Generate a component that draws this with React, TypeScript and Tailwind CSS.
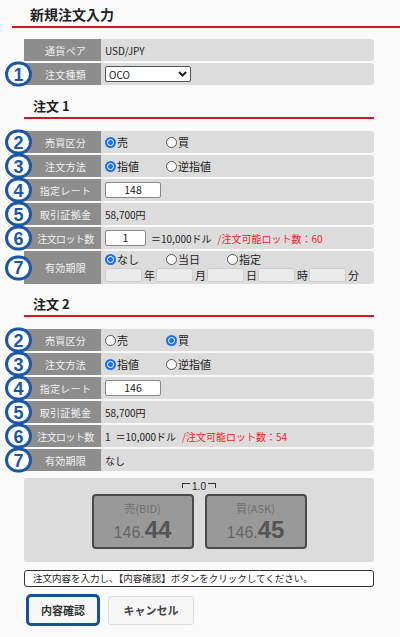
import type { ReactNode } from "react"

const FONT = { fontFamily: '"Noto Sans CJK JP", "Noto Sans", "Liberation Sans", sans-serif' }

function Badge({ n }: { n: number }) {
  return (
    <span
      className="absolute left-[-19px] top-1/2 -translate-y-1/2 w-[27px] h-[25px] rounded-full border-[3px] border-[#1c57a5] bg-white text-[#1c57a5] flex items-center justify-center text-[18px] font-bold leading-none z-10"
      style={{ fontFamily: '"Liberation Sans", Arial, sans-serif' }}
    >
      {n}
    </span>
  )
}

function Row({ label, n, tall, children }: { label: string; n?: number; tall?: boolean; children?: ReactNode }) {
  return (
    <div className={`relative flex mb-[2px] ${tall ? "h-[33px]" : "h-[22px]"}`}>
      {n !== undefined && <Badge n={n} />}
      <div
        className={`w-[77px] shrink-0 bg-[#8d8d8d] text-[#f2f2f2] text-[10px] flex items-center justify-center pl-[6px] ${
          label.length > 5 ? "tracking-[-0.6px]" : "tracking-[0.3px]"
        }`}
      >
        {label}
      </div>
      <div className="flex-1 bg-[#dcdcdc] rounded-r-[3px] pl-[4px] flex items-center text-[10px] text-[#222]">
        {children}
      </div>
    </div>
  )
}

function Radio({ checked, label }: { checked?: boolean; label: string }) {
  return (
    <span className="w-[61px] flex items-center">
      {checked ? (
        <span className="w-[11px] h-[11px] rounded-full bg-[#1a73e8] flex items-center justify-center">
          <span className="w-[7px] h-[7px] rounded-full border-[1.5px] border-white bg-[#1a73e8]" />
        </span>
      ) : (
        <span className="w-[11px] h-[11px] rounded-full border border-[#555] bg-white" />
      )}
      <span className="ml-[1px] text-[11px]">{label}</span>
    </span>
  )
}

function Heading({ children }: { children: ReactNode }) {
  return (
    <div className="border-b-2 border-[#d0191e] pl-[9px] pb-[2px] text-[13px] font-bold text-[#222] leading-[18px]">
      {children}
    </div>
  )
}

function DateBox({ unit }: { unit: string }) {
  return (
    <span className="flex items-center w-[51px]">
      <span className="w-[37px] h-[14px] bg-[#ebebeb] border border-[#cdcdcd] rounded-[2px]" />
      <span className="ml-[2px] text-[11px]">{unit}</span>
    </span>
  )
}

function PriceButton({ label, big }: { label: string; big: string }) {
  return (
    <div className="w-[102px] h-[55px] bg-[#999999] border-2 border-[#4a4a4a] rounded-[4px] flex flex-col items-center justify-center text-[#5c5c5c]">
      <div className="text-[11px] leading-[13px] text-[#6e6e6e]">{label}</div>
      <div className="flex items-baseline leading-none mt-[3px]" style={{ fontFamily: '"Liberation Sans", Arial, sans-serif' }}>
        <span className="text-[16px] text-[#666]">146.</span>
        <span className="text-[24px] font-bold text-[#555]">{big}</span>
      </div>
    </div>
  )
}

export default function App() {
  return (
    <div className="w-[400px] h-[637px] bg-[#fafafa] overflow-hidden" style={FONT}>
      {/* page title */}
      <div className="pt-[5px] ml-[12px]">
        <div className="border-b-2 border-[#d0191e] pl-[18px] pb-[2px] text-[14px] font-bold text-[#222] leading-[19px]">
          新規注文入力
        </div>
      </div>

      <div className="ml-[24px] w-[350px]">
        <div className="mt-[11px]">
          <Row label="通貨ペア">USD/JPY</Row>
          <Row label="注文種類" n={1}>
            <span className="w-[86px] h-[16px] bg-white border border-[#555] rounded-[2px] flex items-center justify-between px-[3px] text-[10px]">
              <span>OCO</span>
              <svg width="9" height="6" viewBox="0 0 9 6">
                <path d="M1 1l3.5 3.5L8 1" fill="none" stroke="#222" strokeWidth="2" />
              </svg>
            </span>
          </Row>
        </div>

        {/* order 1 */}
        <div className="mt-[12px]">
          <Heading>注文 1</Heading>
        </div>
        <div className="mt-[12px]">
          <Row label="売買区分" n={2}>
            <Radio checked label="売" />
            <Radio label="買" />
          </Row>
          <Row label="注文方法" n={3}>
            <Radio checked label="指値" />
            <Radio label="逆指値" />
          </Row>
          <Row label="指定レート" n={4}>
            <span className="w-[56px] h-[16px] bg-white border border-[#888] rounded-[2px] flex items-center justify-center text-[10.5px]">
              148
            </span>
          </Row>
          <Row label="取引証拠金" n={5}>58,700円</Row>
          <Row label="注文ロット数" n={6}>
            <span className="w-[41px] h-[16px] bg-white border border-[#888] rounded-[2px] flex items-center justify-center text-[10.5px]">
              1
            </span>
            <span className="ml-[5px]">＝10,000ドル</span>
            <span className="ml-[6px] text-[#f01e1e]">/注文可能ロット数：60</span>
          </Row>
          <Row label="有効期限" n={7} tall>
            <div className="flex flex-col">
              <div className="flex h-[15px] items-center">
                <Radio checked label="なし" />
                <Radio label="当日" />
                <Radio label="指定" />
              </div>
              <div className="flex h-[16px] items-center">
                <DateBox unit="年" />
                <DateBox unit="月" />
                <DateBox unit="日" />
                <DateBox unit="時" />
                <DateBox unit="分" />
              </div>
            </div>
          </Row>
        </div>

        {/* order 2 */}
        <div className="mt-[11px]">
          <Heading>注文 2</Heading>
        </div>
        <div className="mt-[12px]">
          <Row label="売買区分" n={2}>
            <Radio label="売" />
            <Radio checked label="買" />
          </Row>
          <Row label="注文方法" n={3}>
            <Radio checked label="指値" />
            <Radio label="逆指値" />
          </Row>
          <Row label="指定レート" n={4}>
            <span className="w-[56px] h-[16px] bg-white border border-[#888] rounded-[2px] flex items-center justify-center text-[10.5px]">
              146
            </span>
          </Row>
          <Row label="取引証拠金" n={5}>58,700円</Row>
          <Row label="注文ロット数" n={6}>
            <span>1</span>
            <span className="ml-[5px]">＝10,000ドル</span>
            <span className="ml-[6px] text-[#f01e1e]">/注文可能ロット数：54</span>
          </Row>
          <Row label="有効期限" n={7}>なし</Row>
        </div>

        {/* price panel */}
        <div className="mt-[7px] h-[84px] bg-[#dcdcdc] rounded-[3px] flex flex-col items-center pt-[3px]">
          <div className="text-[10px] leading-[12px] text-[#222] flex items-start" style={{ fontFamily: '"Liberation Sans", Arial, sans-serif' }}>
            <span className="w-[8px] h-[5px] border-t border-l border-[#333] mt-[2px] mr-[2px]" />
            1.0
            <span className="w-[8px] h-[5px] border-t border-r border-[#333] mt-[2px] ml-[2px]" />
          </div>
          <div className="flex gap-[11px] mt-[1px]">
            <PriceButton label="売(BID)" big="44" />
            <PriceButton label="買(ASK)" big="45" />
          </div>
        </div>

        <div className="mt-[8px] h-[17px] bg-white border border-[#333] rounded-[3px] flex items-center pl-[8px] text-[9.5px] text-[#222]">
          注文内容を入力し、【内容確認】ボタンをクリックしてください。
        </div>

        <div className="mt-[7px] flex items-center gap-[8px] ml-[2px]">
          <button className="w-[74px] h-[32px] border-[3px] border-[#1c4f96] rounded-[5px] bg-[#f7f7f7] text-[11px] font-bold text-[#333]">
            内容確認
          </button>
          <button className="w-[86px] h-[29px] border border-[#dcdcdc] rounded-[3px] bg-[#f6f6f6] text-[11px] font-bold text-[#444]">
            キャンセル
          </button>
        </div>
      </div>
    </div>
  )
}
